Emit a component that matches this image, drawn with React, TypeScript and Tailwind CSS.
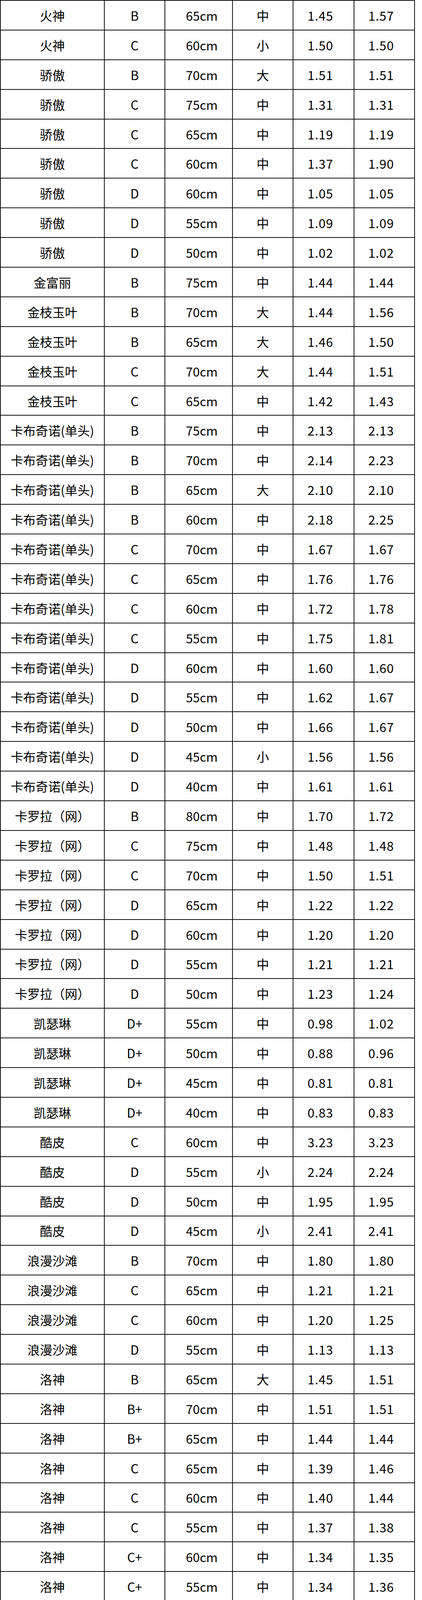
const ROWS: string[][] = [
  ["火神", "B", "65cm", "中", "1.45", "1.57"],
  ["火神", "C", "60cm", "小", "1.50", "1.50"],
  ["骄傲", "B", "70cm", "大", "1.51", "1.51"],
  ["骄傲", "C", "75cm", "中", "1.31", "1.31"],
  ["骄傲", "C", "65cm", "中", "1.19", "1.19"],
  ["骄傲", "C", "60cm", "中", "1.37", "1.90"],
  ["骄傲", "D", "60cm", "中", "1.05", "1.05"],
  ["骄傲", "D", "55cm", "中", "1.09", "1.09"],
  ["骄傲", "D", "50cm", "中", "1.02", "1.02"],
  ["金富丽", "B", "75cm", "中", "1.44", "1.44"],
  ["金枝玉叶", "B", "70cm", "大", "1.44", "1.56"],
  ["金枝玉叶", "B", "65cm", "大", "1.46", "1.50"],
  ["金枝玉叶", "C", "70cm", "大", "1.44", "1.51"],
  ["金枝玉叶", "C", "65cm", "中", "1.42", "1.43"],
  ["卡布奇诺(单头)", "B", "75cm", "中", "2.13", "2.13"],
  ["卡布奇诺(单头)", "B", "70cm", "中", "2.14", "2.23"],
  ["卡布奇诺(单头)", "B", "65cm", "大", "2.10", "2.10"],
  ["卡布奇诺(单头)", "B", "60cm", "中", "2.18", "2.25"],
  ["卡布奇诺(单头)", "C", "70cm", "中", "1.67", "1.67"],
  ["卡布奇诺(单头)", "C", "65cm", "中", "1.76", "1.76"],
  ["卡布奇诺(单头)", "C", "60cm", "中", "1.72", "1.78"],
  ["卡布奇诺(单头)", "C", "55cm", "中", "1.75", "1.81"],
  ["卡布奇诺(单头)", "D", "60cm", "中", "1.60", "1.60"],
  ["卡布奇诺(单头)", "D", "55cm", "中", "1.62", "1.67"],
  ["卡布奇诺(单头)", "D", "50cm", "中", "1.66", "1.67"],
  ["卡布奇诺(单头)", "D", "45cm", "小", "1.56", "1.56"],
  ["卡布奇诺(单头)", "D", "40cm", "中", "1.61", "1.61"],
  ["卡罗拉（网）", "B", "80cm", "中", "1.70", "1.72"],
  ["卡罗拉（网）", "C", "75cm", "中", "1.48", "1.48"],
  ["卡罗拉（网）", "C", "70cm", "中", "1.50", "1.51"],
  ["卡罗拉（网）", "D", "65cm", "中", "1.22", "1.22"],
  ["卡罗拉（网）", "D", "60cm", "中", "1.20", "1.20"],
  ["卡罗拉（网）", "D", "55cm", "中", "1.21", "1.21"],
  ["卡罗拉（网）", "D", "50cm", "中", "1.23", "1.24"],
  ["凯瑟琳", "D+", "55cm", "中", "0.98", "1.02"],
  ["凯瑟琳", "D+", "50cm", "中", "0.88", "0.96"],
  ["凯瑟琳", "D+", "45cm", "中", "0.81", "0.81"],
  ["凯瑟琳", "D+", "40cm", "中", "0.83", "0.83"],
  ["酷皮", "C", "60cm", "中", "3.23", "3.23"],
  ["酷皮", "D", "55cm", "小", "2.24", "2.24"],
  ["酷皮", "D", "50cm", "中", "1.95", "1.95"],
  ["酷皮", "D", "45cm", "小", "2.41", "2.41"],
  ["浪漫沙滩", "B", "70cm", "中", "1.80", "1.80"],
  ["浪漫沙滩", "C", "65cm", "中", "1.21", "1.21"],
  ["浪漫沙滩", "C", "60cm", "中", "1.20", "1.25"],
  ["浪漫沙滩", "D", "55cm", "中", "1.13", "1.13"],
  ["洛神", "B", "65cm", "大", "1.45", "1.51"],
  ["洛神", "B+", "70cm", "中", "1.51", "1.51"],
  ["洛神", "B+", "65cm", "中", "1.44", "1.44"],
  ["洛神", "C", "65cm", "中", "1.39", "1.46"],
  ["洛神", "C", "60cm", "中", "1.40", "1.44"],
  ["洛神", "C", "55cm", "中", "1.37", "1.38"],
  ["洛神", "C+", "60cm", "中", "1.34", "1.35"],
  ["洛神", "C+", "55cm", "中", "1.34", "1.36"],
  ["洛神", "D", "55cm", "中", "1.23", "1.23"],
  ["洛神", "D", "50cm", "中", "1.22", "1.25"],
  ["洛神", "D", "45cm", "中", "1.08", "1.08"],
  ["洛神", "D+", "55cm", "中", "1.26", "1.26"],
  ["洛神", "D+", "50cm", "中", "1.24", "1.27"],
  ["曼塔", "B", "65cm", "中", "2.01", "2.01"],
  ["曼塔", "B", "60cm", "中", "1.97", "1.97"],
  ["曼塔", "C", "70cm", "中", "1.76", "1.76"],
  ["曼塔", "C", "65cm", "中", "1.74", "1.90"],
  ["曼塔", "C", "65cm", "中", "1.76", "1.82"],
  ["曼塔", "C", "60cm", "大", "1.77", "1.78"],
  ["曼塔", "C", "55cm", "中", "1.78", "1.82"],
];

// cell widths incl. the right border, measured off the sheet;
// the cm / price columns sit a little off centre in the source
const COLS = [
  "w-[266px]",
  "w-[155px]",
  "w-[173px] pl-4",
  "w-[155px]",
  "w-[156px] pr-4 tracking-[1px]",
  "w-[155px] pr-4 tracking-[1px]",
];

export default function App() {
  return (
    <div className="bg-white w-[1080px] font-['Noto_Sans_CJK_SC','Noto_Sans',sans-serif] text-black">
      <div className="w-[1062px] border-l-2 border-t-2 border-[#111]">
        {ROWS.map((row, r) => (
          <div key={r} className="flex h-[75.9px]">
            {row.map((cell, c) => (
              <div
                key={c}
                className={`${COLS[c]} shrink-0 flex items-center justify-center border-r-2 border-b-2 border-[#111] text-[32px] leading-none whitespace-nowrap`}
              >
                {cell}
              </div>
            ))}
          </div>
        ))}
      </div>
    </div>
  );
}
